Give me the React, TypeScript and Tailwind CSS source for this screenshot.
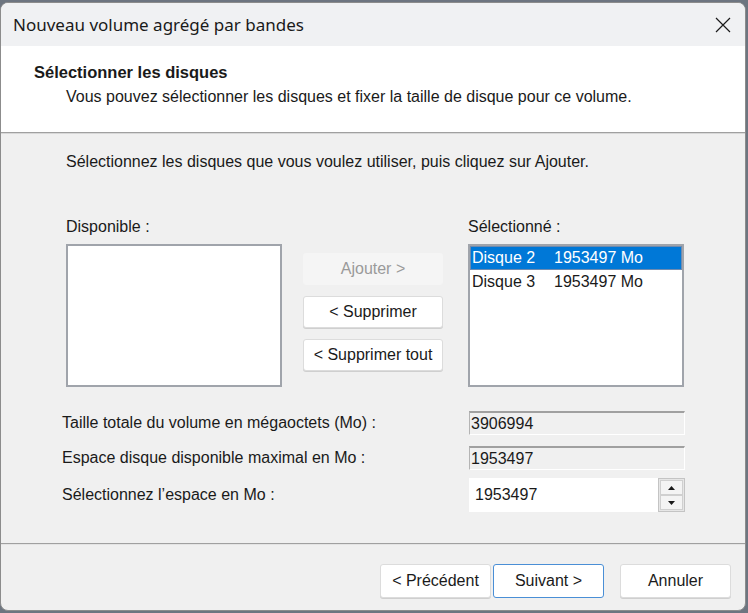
const font = { fontFamily: '"Liberation Sans", Arial, sans-serif' };

function Field({ value }: { value: string }) {
  return (
    <div className="flex h-[24px] w-[216px] items-center border-t-2 border-l border-t-[#a0a0a0] border-l-[#b4b4b4] border-b border-r border-b-white border-r-white bg-[#f0f0f0] pl-px text-[16px] text-[#1a1a1a]">
      {value}
    </div>
  );
}

function DlgButton({
  children,
  disabled,
  focused,
  className = "",
}: {
  children: React.ReactNode;
  disabled?: boolean;
  focused?: boolean;
  className?: string;
}) {
  return (
    <button
      type="button"
      className={
        "flex items-center justify-center rounded-[3px] border text-[16px] " +
        (disabled
          ? "border-[#f5f5f5] bg-[#f5f5f5] text-[#9a9a9a] "
          : focused
            ? "border-[#4a8fd6] bg-white text-[#1a1a1a] "
            : "border-[#dcdcdc] bg-white text-[#1a1a1a] shadow-[0_1px_0_#cfcfcf] ") +
        className
      }
    >
      {children}
    </button>
  );
}

export default function App() {
  return (
    <div className="h-[613px] w-[748px] overflow-hidden bg-[#6d7580]" style={font}>
      <div className="mt-[2px] flex h-[609px] w-[746px] flex-col overflow-hidden rounded-[8px] border border-[#8c8c8c] bg-[#f0f0f0]">
        {/* title bar */}
        <div className="flex h-[43px] shrink-0 items-center justify-between bg-[#f0f1f3] pl-[12px] pr-[12px]">
          <span className="text-[17px] text-[#1a1a1a]" style={{ fontFamily: '"Noto Sans", "Open Sans", sans-serif' }}>
            Nouveau volume agrégé par bandes
          </span>
          <svg width="16" height="16" viewBox="0 0 16 16" className="mr-[2px]">
            <path d="M1 1 L15 15 M15 1 L1 15" stroke="#1a1a1a" strokeWidth="1.2" />
          </svg>
        </div>

        {/* header */}
        <div className="h-[86px] shrink-0 bg-white pl-[33px] pt-[16px]">
          <div className="text-[16.5px] font-bold leading-[20px] text-[#1a1a1a]">Sélectionner les disques</div>
          <div className="ml-[32px] mt-[6px] text-[16px] leading-[18px] text-[#1a1a1a]">
            Vous pouvez sélectionner les disques et fixer la taille de disque pour ce volume.
          </div>
        </div>
        <div className="h-[2px] shrink-0 border-t border-[#a0a0a0] bg-[#d8d8d8]" />

        {/* body */}
        <div className="flex h-[409px] shrink-0 flex-col pl-[65px] pt-[19px] text-[16px] leading-[18px] text-[#1a1a1a]">
          <div>Sélectionnez les disques que vous voulez utiliser, puis cliquez sur Ajouter.</div>

          <div className="mt-[47px] flex">
            <div className="flex w-[216px] flex-col">
              <div className="h-[18px]">Disponible :</div>
              <div className="mt-[8px] h-[143px] border-2 border-[#a0a4ab] bg-white" />
            </div>

            <div className="ml-[21px] mt-[35px] flex w-[140px] flex-col gap-[11px]">
              <DlgButton disabled className="h-[32px]">Ajouter &gt;</DlgButton>
              <DlgButton className="h-[32px]">&lt; Supprimer</DlgButton>
              <DlgButton className="h-[32px]">&lt; Supprimer tout</DlgButton>
            </div>

            <div className="ml-[25px] flex w-[216px] flex-col">
              <div className="h-[18px]">Sélectionné :</div>
              <div className="mt-[8px] h-[143px] border-2 border-[#a0a4ab] bg-white text-[16px]">
                <div className="flex h-[24px] items-center border border-[#6e8bb0] bg-[#0078d7] pl-[1px] text-white">
                  <span className="w-[82px]">Disque 2</span>
                  <span>1953497 Mo</span>
                </div>
                <div className="flex h-[23px] items-center pl-[2px]">
                  <span className="w-[82px]">Disque 3</span>
                  <span>1953497 Mo</span>
                </div>
              </div>
            </div>
          </div>

          <div className="-ml-[4px] mt-[24px] flex flex-col">
            <div className="flex h-[24px] items-center">
              <span className="w-[407px]">Taille totale du volume en mégaoctets (Mo) :</span>
              <Field value="3906994" />
            </div>
            <div className="mt-[11px] flex h-[24px] items-center">
              <span className="w-[407px]">Espace disque disponible maximal en Mo :</span>
              <Field value="1953497" />
            </div>
            <div className="mt-[8px] flex h-[34px] items-center">
              <span className="w-[407px]">Sélectionnez l’espace en Mo :</span>
              <div className="flex h-[34px] w-[216px]">
                <div className="flex flex-1 items-center bg-white pl-[6px] text-[16px]">1953497</div>
                <div className="flex w-[27px] flex-col border border-[#c4c4c4] bg-[#e6e6e6] p-px">
                  <div className="flex flex-1 items-center justify-center border border-[#d0d0d0] bg-[#f4f4f4]">
                    <svg width="7" height="4" viewBox="0 0 7 4"><path d="M3.5 0 L7 4 L0 4 Z" fill="#1a1a1a" /></svg>
                  </div>
                  <div className="flex flex-1 items-center justify-center border border-[#d0d0d0] bg-[#f4f4f4]">
                    <svg width="7" height="4" viewBox="0 0 7 4"><path d="M0 0 L7 0 L3.5 4 Z" fill="#1a1a1a" /></svg>
                  </div>
                </div>
              </div>
            </div>
          </div>
        </div>
        <div className="h-[2px] shrink-0 border-t border-[#a0a0a0] bg-[#e4e4e4]" />

        {/* footer */}
        <div className="flex flex-1 items-start pl-[379px] pt-[19px]">
          <DlgButton className="h-[34px] w-[111px]">&lt; Précédent</DlgButton>
          <DlgButton focused className="ml-[2px] h-[34px] w-[111px]">Suivant &gt;</DlgButton>
          <DlgButton className="ml-[16px] h-[34px] w-[111px]">Annuler</DlgButton>
        </div>
      </div>
    </div>
  );
}
